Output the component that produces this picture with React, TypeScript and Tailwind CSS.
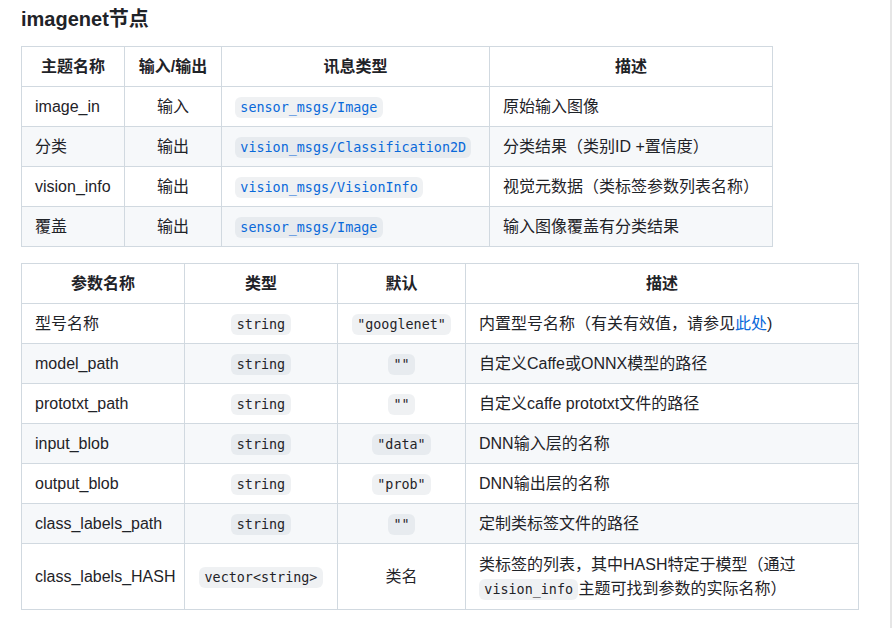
const sans = "font-['Liberation_Sans','Noto_Sans_CJK_SC',sans-serif]";

function Code({ children, blue }: { children: React.ReactNode; blue?: boolean }) {
  return (
    <code
      className={`rounded-md bg-[rgba(175,184,193,0.2)] px-[0.4em] py-[3px] font-['DejaVu_Sans_Mono',monospace] text-[13.4px] leading-[15px] ${
        blue ? "text-[#0969da]" : "text-[#1f2328]"
      }`}
    >
      {children}
    </code>
  );
}

const th = "h-[40px] border border-[#d1d9e0] px-[13px] py-0 font-bold text-center leading-6";
const td = "h-[40px] border border-[#d1d9e0] px-[13px] py-0 leading-6";

const topics = [
  { name: "image_in", dir: "输入", type: "sensor_msgs/Image", desc: "原始输入图像" },
  { name: "分类", dir: "输出", type: "vision_msgs/Classification2D", desc: "分类结果（类别ID +置信度）" },
  { name: "vision_info", dir: "输出", type: "vision_msgs/VisionInfo", desc: "视觉元数据（类标签参数列表名称）" },
  { name: "覆盖", dir: "输出", type: "sensor_msgs/Image", desc: "输入图像覆盖有分类结果" },
];

const params: { name: string; type: string; def: React.ReactNode; desc: React.ReactNode }[] = [
  {
    name: "型号名称",
    type: "string",
    def: <Code>"googlenet"</Code>,
    desc: (
      <>
        内置型号名称（有关有效值，请参见<a className="text-[#0969da]">此处</a>)
      </>
    ),
  },
  { name: "model_path", type: "string", def: <Code>""</Code>, desc: "自定义Caffe或ONNX模型的路径" },
  { name: "prototxt_path", type: "string", def: <Code>""</Code>, desc: "自定义caffe prototxt文件的路径" },
  { name: "input_blob", type: "string", def: <Code>"data"</Code>, desc: "DNN输入层的名称" },
  { name: "output_blob", type: "string", def: <Code>"prob"</Code>, desc: "DNN输出层的名称" },
  { name: "class_labels_path", type: "string", def: <Code>""</Code>, desc: "定制类标签文件的路径" },
  {
    name: "class_labels_HASH",
    type: "vector<string>",
    def: "类名",
    desc: (
      <>
        类标签的列表，其中HASH特定于模型（通过
        <br />
        <Code>vision_info</Code>主题可找到参数的实际名称）
      </>
    ),
  },
];

export default function App() {
  return (
    <div className={`${sans} min-h-screen border-r-2 border-[#e6e6e6] bg-white text-base text-[#1f2328]`}>
      <div className="px-[21px]">
        <h3 className="pt-[6px] text-[20px] font-bold leading-[26px]">imagenet节点</h3>

        <table className="mt-[14px] table-fixed border-collapse w-[752px]">
          <thead>
            <tr>
              <th className={`${th} w-[103px]`}>主题名称</th>
              <th className={`${th} w-[97px]`}>输入/输出</th>
              <th className={`${th} w-[268px]`}>讯息类型</th>
              <th className={th}>描述</th>
            </tr>
          </thead>
          <tbody>
            {topics.map((t, i) => (
              <tr key={i} className={i % 2 === 0 ? "bg-white" : "bg-[#f6f8fa]"}>
                <td className={td}>{t.name}</td>
                <td className={`${td} text-center`}>{t.dir}</td>
                <td className={td}>
                  <Code blue>{t.type}</Code>
                </td>
                <td className={td}>{t.desc}</td>
              </tr>
            ))}
          </tbody>
        </table>

        <table className="mt-[16px] table-fixed border-collapse w-[838px]">
          <thead>
            <tr>
              <th className={`${th} w-[163px]`}>参数名称</th>
              <th className={`${th} w-[153px]`}>类型</th>
              <th className={`${th} w-[128px]`}>默认</th>
              <th className={th}>描述</th>
            </tr>
          </thead>
          <tbody>
            {params.map((p, i) => (
              <tr key={i} className={i % 2 === 0 ? "bg-white" : "bg-[#f6f8fa]"}>
                <td className={td}>{p.name}</td>
                <td className={`${td} text-center`}>
                  <Code>{p.type}</Code>
                </td>
                <td className={`${td} text-center`}>{p.def}</td>
                <td className={`${td} ${i === params.length - 1 ? "h-[66px]" : ""}`}>{p.desc}</td>
              </tr>
            ))}
          </tbody>
        </table>
      </div>
    </div>
  );
}
